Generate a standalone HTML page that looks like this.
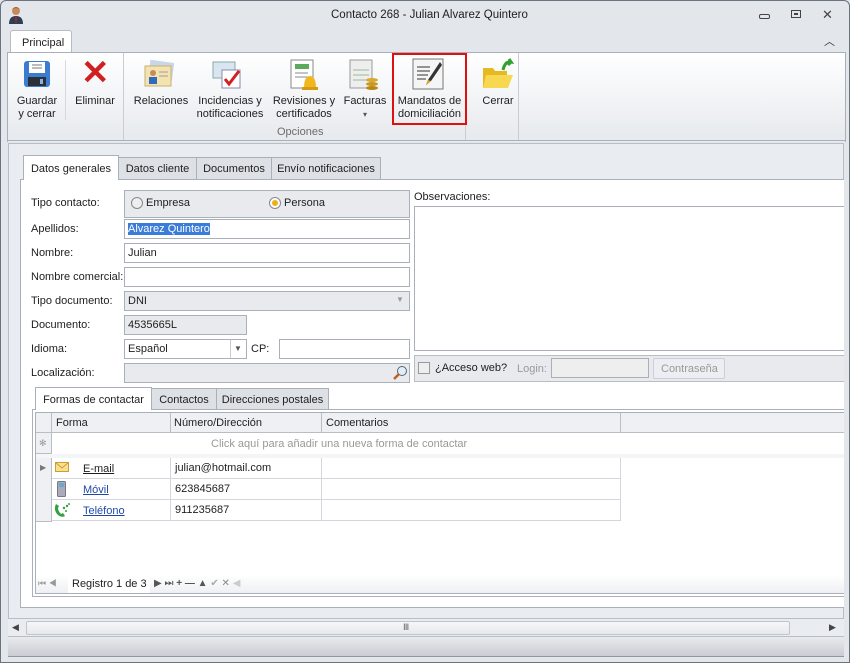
<!DOCTYPE html>
<html><head><meta charset="utf-8"><style>
*{box-sizing:border-box;margin:0;padding:0}
body{width:850px;height:663px;overflow:hidden;background:#e3e6ea;font-family:"Liberation Sans",sans-serif;font-size:11px;color:#1e1e1e;position:relative}
.a{position:absolute}
.t{position:absolute;white-space:nowrap}
.inp{position:absolute;background:#fff;border:1px solid #a9b0ba;height:20px;padding:3px 3px;white-space:nowrap}
.gray{background:#e8eaee}
.lbl{position:absolute;left:31px;white-space:nowrap}
.rb{position:absolute;text-align:center;font-size:11px;line-height:13px;white-space:nowrap}
.tab{position:absolute;border:1px solid #a9b0ba;border-bottom:none;background:#dde1e6;height:22px;padding-top:5px;text-align:center;white-space:nowrap}
.cell{position:absolute;border-right:1px solid #d3d7dd;border-bottom:1px solid #d3d7dd;height:21px;padding:4px 4px;white-space:nowrap}
</style></head><body>
<div class="a" style="left:0;top:0;width:850px;height:663px;border:1px solid #6b7380;border-radius:6px 6px 0 0"></div>
<svg class="a" style="left:8px;top:6px" width="16" height="18" viewBox="0 0 16 18"><circle cx="8" cy="5" r="4" fill="#c98a5a"/><path d="M3 4 Q8 -1 13 4 L12 3 Q8 1 4 3Z" fill="#5a3520"/><path d="M1 18 Q1 10 8 10 Q15 10 15 18Z" fill="#2d3e57"/><path d="M7 11 L9 11 L8.5 17 L7.5 17Z" fill="#c02020"/></svg>
<div class="t" style="left:331px;top:9px;font-size:11.5px">Contacto 268 - Julian Alvarez Quintero</div>
<div class="a" style="left:759px;top:14px;width:11px;height:5px;border:1px solid #444;border-radius:2px"></div>
<div class="a" style="left:791px;top:10px;width:10px;height:8px;border:1px solid #444"><div style="margin:2px 2px;width:4px;height:2px;border:1px solid #444"></div></div>
<div class="t" style="left:822px;top:7px;font-size:13px;color:#444">✕</div>
<div class="t" style="left:824px;top:33px;font-size:11px;color:#333">︿</div>
<div class="a" style="left:10px;top:30px;width:62px;height:23px;background:#fff;border:1px solid #b5bcc6;border-bottom:none;border-radius:3px 3px 0 0;padding:6px 0 0 11px">Principal</div>
<div class="a" style="left:7px;top:52px;width:839px;height:90px;border:1px solid #a9b0ba;border-bottom:none;background:linear-gradient(#fff,#e6e9ed)"></div>
<div class="a" style="left:8px;top:140px;width:838px;height:1px;background:#a9b0ba"></div>
<div class="a" style="left:8px;top:143px;width:836px;height:1px;background:#b8bec6"></div>
<div class="a" style="left:65px;top:60px;width:1px;height:60px;background:#d5d9de"></div>
<div class="a" style="left:123px;top:53px;width:1px;height:87px;background:#c8cdd4"></div>
<div class="a" style="left:465px;top:53px;width:1px;height:87px;background:#c8cdd4"></div>
<div class="a" style="left:518px;top:53px;width:1px;height:87px;background:#c8cdd4"></div>
<svg class="a" style="left:23px;top:60px" width="28" height="28" viewBox="0 0 28 28"><rect x="1" y="1" width="26" height="26" rx="3" fill="#3a7dd0"/><rect x="6" y="2" width="16" height="11" fill="#fff"/><line x1="9" y1="5" x2="19" y2="5" stroke="#777"/><line x1="9" y1="8" x2="19" y2="8" stroke="#777"/><rect x="5" y="17" width="18" height="9" fill="#2a2f3a"/><rect x="17" y="19" width="3" height="5" fill="#8fb0d8"/></svg>
<div class="t" style="left:81px;top:55px;font-size:34px;color:#d02020;font-weight:bold;line-height:36px">✕</div>
<svg class="a" style="left:144px;top:59px" width="30" height="30"><rect x="5" y="2" width="24" height="18" fill="#c8d6e8" transform="rotate(8 15 12)"/><rect x="1" y="7" width="26" height="20" fill="#f2e3b0" stroke="#c9b070"/><circle cx="9" cy="14" r="3" fill="#c98a5a"/><rect x="5" y="18" width="8" height="7" fill="#2d6ac0"/><line x1="15" y1="13" x2="24" y2="13" stroke="#a99"/><line x1="15" y1="17" x2="24" y2="17" stroke="#a99"/></svg>
<svg class="a" style="left:211px;top:58px" width="32" height="32"><rect x="2" y="4" width="22" height="16" fill="#d9e6f2" stroke="#8aa"/><rect x="11" y="12" width="18" height="18" fill="#fff" stroke="#88a"/><path d="M14 21 L18 26 L28 13" stroke="#d02020" stroke-width="3" fill="none"/></svg>
<svg class="a" style="left:288px;top:59px" width="32" height="32"><rect x="3" y="1" width="22" height="28" fill="#fff" stroke="#888"/><rect x="7" y="5" width="14" height="5" fill="#5caa5c"/><line x1="7" y1="14" x2="20" y2="14" stroke="#888"/><line x1="7" y1="18" x2="20" y2="18" stroke="#888"/><path d="M16 29 Q16 17 22 17 Q28 17 28 29Z" fill="#f0b820"/><rect x="14" y="28" width="16" height="3" fill="#d89a10"/></svg>
<svg class="a" style="left:348px;top:58px" width="32" height="32"><rect x="2" y="2" width="22" height="28" fill="#eee" stroke="#999"/><line x1="5" y1="12" x2="21" y2="12" stroke="#9b9"/><line x1="5" y1="17" x2="21" y2="17" stroke="#9b9"/><line x1="5" y1="22" x2="21" y2="22" stroke="#9b9"/><ellipse cx="24" cy="22" rx="6" ry="2" fill="#d8a830"/><ellipse cx="24" cy="26" rx="6" ry="2" fill="#c89820"/><ellipse cx="24" cy="30" rx="6" ry="2" fill="#b88810"/></svg>
<svg class="a" style="left:412px;top:58px" width="32" height="32"><rect x="1" y="1" width="30" height="30" fill="#f5f5f5" stroke="#777"/><line x1="5" y1="9" x2="18" y2="9" stroke="#333"/><line x1="5" y1="13" x2="18" y2="13" stroke="#333"/><line x1="5" y1="17" x2="16" y2="17" stroke="#333"/><line x1="5" y1="21" x2="14" y2="21" stroke="#333"/><path d="M28 4 L16 22 L14 27 L19 23 L30 7Z" fill="#333"/><path d="M16 22 L14 27 L19 23Z" fill="#e0a020"/></svg>
<svg class="a" style="left:481px;top:58px" width="34" height="32"><path d="M2 10 L12 10 L14 13 L26 13 L26 30 L2 30Z" fill="#e8b820"/><path d="M5 17 L32 17 L27 30 L2 30Z" fill="#f8d850"/><path d="M22 12 Q24 3 30 4 L28 1 M30 4 L27 7" stroke="#30a030" stroke-width="3" fill="none"/></svg>
<div class="rb" style="left:14px;top:95px;width:46px">Guardar<br>y cerrar</div>
<div class="rb" style="left:73px;top:95px;width:44px">Eliminar</div>
<div class="rb" style="left:131px;top:95px;width:60px">Relaciones</div>
<div class="rb" style="left:194px;top:95px;width:72px">Incidencias y<br>notificaciones</div>
<div class="rb" style="left:270px;top:95px;width:68px">Revisiones y<br>certificados</div>
<div class="rb" style="left:340px;top:95px;width:50px">Facturas<br><span style="font-size:8px;color:#555">▾</span></div>
<div class="a" style="left:392px;top:53px;width:75px;height:72px;border:2px solid #e01010"></div>
<div class="rb" style="left:394px;top:95px;width:71px">Mandatos de<br>domiciliación</div>
<div class="rb" style="left:476px;top:95px;width:44px">Cerrar</div>
<div class="t" style="left:277px;top:126px;color:#6b6b6b">Opciones</div>
<div class="a" style="left:8px;top:144px;width:836px;height:474px;background:#e9ecf0;border-left:1px solid #b8bec6;border-right:1px solid #b8bec6"></div>
<div class="a" style="left:20px;top:179px;width:824px;height:429px;background:#fff;border:1px solid #a9b0ba;border-right:none"></div>
<div class="tab" style="left:118px;top:157px;width:79px">Datos cliente</div>
<div class="tab" style="left:196px;top:157px;width:76px">Documentos</div>
<div class="tab" style="left:271px;top:157px;width:110px">Envío notificaciones</div>
<div class="tab" style="left:23px;top:155px;width:96px;height:25px;background:#fff;padding-top:7px">Datos generales</div>
<div class="lbl" style="top:197px">Tipo contacto:</div>
<div class="a gray" style="left:124px;top:190px;width:286px;height:28px;border:1px solid #a9b0ba"></div>
<div class="a" style="left:131px;top:197px;width:12px;height:12px;border-radius:50%;border:1px solid #888;background:#eee"></div>
<div class="t" style="left:146px;top:197px">Empresa</div>
<div class="a" style="left:269px;top:197px;width:12px;height:12px;border-radius:50%;border:1px solid #888;background:#fff"><div style="margin:2px;width:6px;height:6px;border-radius:50%;background:#f0b010"></div></div>
<div class="t" style="left:284px;top:197px">Persona</div>
<div class="lbl" style="top:223px">Apellidos:</div>
<div class="inp" style="left:124px;top:219px;width:286px"><span style="background:#3a7cd8;color:#fff">Alvarez Quintero</span></div>
<div class="lbl" style="top:247px">Nombre:</div>
<div class="inp" style="left:124px;top:243px;width:286px">Julian</div>
<div class="lbl" style="top:271px">Nombre comercial:</div>
<div class="inp" style="left:124px;top:267px;width:286px"></div>
<div class="lbl" style="top:295px">Tipo documento:</div>
<div class="inp gray" style="left:124px;top:291px;width:286px">DNI</div>
<div class="t" style="left:396px;top:295px;font-size:8px;color:#999">▼</div>
<div class="lbl" style="top:319px">Documento:</div>
<div class="inp gray" style="left:124px;top:315px;width:123px">4535665L</div>
<div class="lbl" style="top:343px">Idioma:</div>
<div class="inp" style="left:124px;top:339px;width:123px">Español</div>
<div class="a" style="left:230px;top:340px;width:1px;height:18px;background:#ccc"></div>
<div class="t" style="left:234px;top:344px;font-size:8px;color:#555">▼</div>
<div class="t" style="left:251px;top:343px">CP:</div>
<div class="inp" style="left:279px;top:339px;width:131px"></div>
<div class="lbl" style="top:367px">Localización:</div>
<div class="inp gray" style="left:124px;top:363px;width:286px"></div>
<svg class="a" style="left:392px;top:365px" width="16" height="16"><circle cx="10" cy="6" r="4.5" fill="#dfeef9" stroke="#567"/><line x1="7" y1="9" x2="2" y2="14" stroke="#c06020" stroke-width="2.5"/></svg>
<div class="t" style="left:414px;top:191px">Observaciones:</div>
<div class="a" style="left:414px;top:206px;width:430px;height:145px;border:1px solid #a9b0ba;border-right:none"></div>
<div class="a gray" style="left:414px;top:355px;width:430px;height:27px;border:1px solid #b8bec6;border-right:none"></div>
<div class="a" style="left:418px;top:362px;width:12px;height:12px;border:1px solid #999;background:#eee"></div>
<div class="t" style="left:435px;top:362px">¿Acceso web?</div>
<div class="t" style="left:517px;top:363px;color:#999">Login:</div>
<div class="a" style="left:551px;top:358px;width:98px;height:20px;border:1px solid #a9b0ba;background:#eee"></div>
<div class="a" style="left:653px;top:358px;width:72px;height:21px;border:1px solid #ccd;border-radius:2px;background:#eceef1;color:#999;padding:4px 0 0 7px">Contraseña</div>
<div class="a" style="left:32px;top:409px;width:812px;height:188px;border:1px solid #a9b0ba;border-right:none"></div>
<div class="tab" style="left:151px;top:388px;width:66px;height:21px;padding-top:5px">Contactos</div>
<div class="tab" style="left:216px;top:388px;width:113px;height:21px;padding-top:5px">Direcciones postales</div>
<div class="tab" style="left:35px;top:387px;width:117px;height:23px;background:#fff;padding-top:6px">Formas de contactar</div>
<div class="a" style="left:35px;top:412px;width:809px;height:182px;border:1px solid #a9b0ba;border-right:none;background:#fff"></div>
<div class="a" style="left:36px;top:413px;width:808px;height:20px;background:#eef0f3;border-bottom:1px solid #b8bec6"></div>
<div class="a" style="left:51px;top:413px;width:1px;height:20px;background:#b8bec6"></div>
<div class="a" style="left:170px;top:413px;width:1px;height:20px;background:#b8bec6"></div>
<div class="a" style="left:321px;top:413px;width:1px;height:20px;background:#b8bec6"></div>
<div class="a" style="left:620px;top:413px;width:1px;height:20px;background:#b8bec6"></div>
<div class="t" style="left:56px;top:417px">Forma</div>
<div class="t" style="left:174px;top:417px">Número/Dirección</div>
<div class="t" style="left:326px;top:417px">Comentarios</div>
<div class="a" style="left:36px;top:433px;width:16px;height:21px;background:#eef0f3;border-right:1px solid #b8bec6;border-bottom:1px solid #b8bec6;color:#999;font-size:9px;padding:5px 0 0 3px">✻</div>
<div class="t" style="left:211px;top:438px;color:#999">Click aquí para añadir una nueva forma de contactar</div>
<div class="a" style="left:36px;top:454px;width:808px;height:4px;background:#f4f5f7"></div>
<div class="a" style="left:36px;top:458px;width:16px;height:64px;background:#eef0f3;border-right:1px solid #b8bec6"></div>
<div class="t" style="left:40px;top:463px;font-size:8px;color:#777">▶</div>
<div class="cell" style="left:52px;top:458px;width:119px"></div><div class="cell" style="left:171px;top:458px;width:151px">julian@hotmail.com</div><div class="cell" style="left:322px;top:458px;width:299px"></div>
<div class="cell" style="left:52px;top:479px;width:119px"></div><div class="cell" style="left:171px;top:479px;width:151px">623845687</div><div class="cell" style="left:322px;top:479px;width:299px"></div>
<div class="cell" style="left:52px;top:500px;width:119px"></div><div class="cell" style="left:171px;top:500px;width:151px">911235687</div><div class="cell" style="left:322px;top:500px;width:299px"></div>
<div class="a" style="left:36px;top:521px;width:16px;height:1px;background:#b8bec6"></div>
<svg class="a" style="left:55px;top:462px" width="14" height="10"><rect x="0.5" y="0.5" width="13" height="9" fill="#f8e090" stroke="#c9a030"/><path d="M0.5 0.5 L7 6 L13.5 0.5" stroke="#c9a030" fill="none"/></svg>
<svg class="a" style="left:57px;top:481px" width="9" height="16"><rect x="0.5" y="0.5" width="8" height="15" rx="1" fill="#aab" stroke="#778"/><rect x="2" y="2" width="5" height="4" fill="#6ac"/></svg>
<svg class="a" style="left:53px;top:502px" width="18" height="16"><path d="M3 2 Q0 8 5 13 Q9 16 12 14 L10 11 L8 12 Q5 9 5 6 L6 4Z" fill="#30a040"/><circle cx="11" cy="6" r="1.2" fill="#30a040"/><circle cx="14" cy="4" r="1.2" fill="#30a040"/><circle cx="16" cy="2" r="1" fill="#30a040"/><circle cx="13" cy="9" r="1" fill="#30a040"/></svg>
<div class="t" style="left:83px;top:463px;text-decoration:underline">E-mail</div>
<div class="t" style="left:83px;top:484px;text-decoration:underline;color:#1f49a8">Móvil</div>
<div class="t" style="left:83px;top:505px;text-decoration:underline;color:#1f49a8">Teléfono</div>
<div class="a" style="left:36px;top:575px;width:808px;height:18px;background:linear-gradient(#fff,#eef0f3)"></div>
<div class="t" style="left:38px;top:578px;font-size:9px;color:#999">⏮ ◀</div>
<div class="a" style="left:68px;top:575px;width:82px;height:18px;background:#fff"></div>
<div class="t" style="left:72px;top:578px">Registro 1 de 3</div>
<div class="t" style="left:154px;top:578px;font-size:10px;color:#555">▶ ⏭ <b>+</b> <b>—</b> ▲ <span style="color:#aaa">✔</span> <span style="color:#888">✕</span> <span style="color:#ccc">◀</span></div>
<div class="a" style="left:8px;top:618px;width:836px;height:19px;background:#e9ecf0;border-top:1px solid #b8bec6;border-bottom:1px solid #b8bec6"></div>
<div class="a" style="left:26px;top:621px;width:764px;height:14px;background:linear-gradient(#f6f7f8,#e6e8eb);border:1px solid #c0c5cc;border-radius:2px"></div>
<div class="t" style="left:403px;top:622px;font-size:9px;color:#666">Ⅲ</div>
<div class="t" style="left:12px;top:622px;font-size:9px;color:#444">◀</div>
<div class="t" style="left:829px;top:622px;font-size:9px;color:#444">▶</div>
<div class="a" style="left:8px;top:637px;width:836px;height:20px;background:linear-gradient(#e8eaed,#c9cdd3);border-bottom:1px solid #8f96a0"></div>
</body></html>
